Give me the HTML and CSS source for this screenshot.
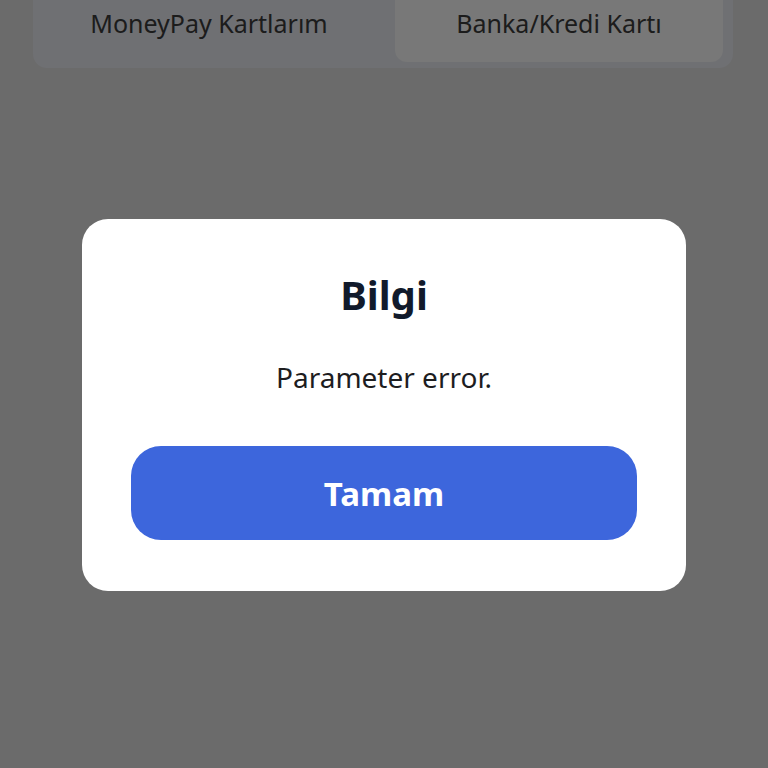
FILE: index.html
```html
<!DOCTYPE html>
<html lang="tr">
<head>
  <meta charset="UTF-8" />
  <meta name="viewport" content="width=device-width, initial-scale=1.0"/>
  <title>Ödeme</title>
  <link rel="stylesheet" href="styles.css">
</head>
<body>

<div class="page">
  <!-- Payment method tabs -->
  <div class="tabs">
    <div class="tab">MoneyPay Kartlarım</div>
    <div class="tab active">Banka/Kredi Kartı</div>
  </div>
</div>

<!-- Info dialog -->
<div class="overlay">
  <div class="dialog">
    <h2 class="dialog-title">Bilgi</h2>
    <p class="dialog-text">Parameter error.</p>
    <button class="dialog-btn">Tamam</button>
  </div>
</div>

</body>
</html>
```

FILE: styles.css
```css
body {
  font-family: "Noto Sans", "Open Sans", sans-serif;
  background-color: #d6d6d6;
  margin: 0;
  height: 768px;
  overflow: hidden;
}

.page {
  padding: 0 35px 0 33px;
}

.tabs {
  display: flex;
  gap: 10px;
  background: #dee0e6;
  padding: 0 10px 6px 10px;
  border-radius: 0 0 14px 14px;
}

.tab {
  flex: 1;
  height: 62px;
  display: flex;
  align-items: center;
  justify-content: center;
  padding: 0 10px 17px 0;
  box-sizing: border-box;
  font-size: 25px;
  color: #383838;
}

.tab.active {
  flex: 0 0 328px;
  padding-right: 0;
  background: #f0f0f0;
  border-radius: 0 0 12px 12px;
}

.overlay {
  position: fixed;
  inset: 0;
  background: rgba(0, 0, 0, 0.5);
  display: flex;
  align-items: center;
  justify-content: center;
}

.dialog {
  width: 604px;
  box-sizing: border-box;
  background: white;
  border-radius: 26px;
  padding: 50px 49px 51px;
  text-align: center;
  margin-top: 42px;
}

.dialog-title {
  margin: 0;
  font-size: 40px;
  font-weight: bold;
  color: #111a2b;
  line-height: 52px;
}

.dialog-text {
  margin: 38px 0 0;
  font-size: 28px;
  color: #1d1d1f;
  line-height: 36px;
}

.dialog-btn {
  margin-top: 51px;
  width: 100%;
  height: 94px;
  border: none;
  border-radius: 30px;
  background-color: #3d66dc;
  color: white;
  font-family: inherit;
  font-size: 33px;
  font-weight: bold;
}
```
